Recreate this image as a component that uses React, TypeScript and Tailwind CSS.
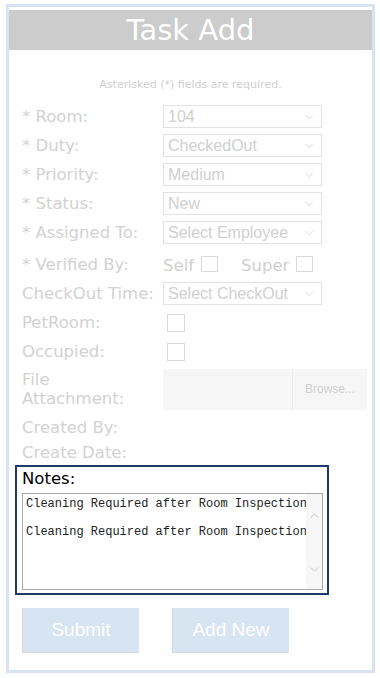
import { ChevronDown, ChevronUp } from "lucide-react";

type SelectRow = { label: string; value: string; required?: boolean };

const selects: SelectRow[] = [
  { label: "Room:", value: "104", required: true },
  { label: "Duty:", value: "CheckedOut", required: true },
  { label: "Priority:", value: "Medium", required: true },
  { label: "Status:", value: "New", required: true },
  { label: "Assigned To:", value: "Select Employee", required: true },
];

const verdana = "font-['DejaVu_Sans',Verdana,sans-serif]";
const arial = "font-['Liberation_Sans',Arial,sans-serif]";

function Label({ children, required }: { children: React.ReactNode; required?: boolean }) {
  return (
    <span className={`${verdana} text-[16.5px] leading-[19px] text-[#d2d2d2] w-[141px] shrink-0 whitespace-nowrap`}>
      {required && "* "}
      {children}
    </span>
  );
}

function FakeSelect({ value }: { value: string }) {
  return (
    <div className="w-[159px] h-[23px] border border-[#e2e2e2] flex items-center justify-between pl-[4px] pr-[5px]">
      <span className={`${arial} text-[16px] leading-none text-[#d0d0d0]`}>{value}</span>
      <ChevronDown size={14} strokeWidth={1.2} className="text-[#c8c8c8]" />
    </div>
  );
}

function Box({ className = "" }: { className?: string }) {
  return <span className={`inline-block w-[17px] h-[16px] border border-[#dadada] bg-white ${className}`} />;
}

export default function App() {
  return (
    <div className="w-[380px] h-[678px] bg-white">
      <div className="ml-[6px] pt-[4px]">
        <div className="w-[369px] h-[669px] border-[3px] border-[#dae3f3] pt-[3px]">
          <div className="h-[40px] bg-[#cccccc] flex items-center justify-center">
            <h1 className={`${verdana} text-[29px] leading-none text-white`}>Task Add</h1>
          </div>

          <p className={`${verdana} mt-[28px] text-center text-[11px] leading-[13px] text-[#cfcfcf]`}>
            Asterisked (*) fields are required.
          </p>

          <div className="pl-[13px] mt-[11px] flex flex-col">
            {selects.map((row) => (
              <div key={row.label} className="h-[29px] flex items-center">
                <Label required={row.required}>{row.label}</Label>
                <FakeSelect value={row.value} />
              </div>
            ))}

            <div className="h-[32px] flex items-center pt-[2px]">
              <Label required>Verified By:</Label>
              <span className={`${verdana} text-[16.5px] leading-none text-[#d0d0d0] mt-[4px]`}>Self</span>
              <Box className="ml-[7px]" />
              <span className={`${verdana} text-[16.5px] leading-none text-[#d0d0d0] ml-[23px] mt-[4px]`}>Super</span>
              <Box className="ml-[7px]" />
            </div>

            <div className="h-[29px] flex items-center">
              <Label>CheckOut Time:</Label>
              <FakeSelect value="Select CheckOut" />
            </div>

            <div className="h-[29px] flex items-center">
              <Label>PetRoom:</Label>
              <Box className="ml-[4px] h-[18px] w-[18px]" />
            </div>

            <div className="h-[29px] flex items-center">
              <Label>Occupied:</Label>
              <Box className="ml-[4px] h-[18px] w-[18px]" />
            </div>

            <div className="h-[46px] flex items-center">
              <Label>
                File
                <br />
                Attachment:
              </Label>
              <div className="w-[204px] h-[41px] bg-[#f6f6f6] flex">
                <div className="flex-1" />
                <div className={`${arial} w-[75px] border-l border-[#ececec] flex items-center justify-center text-[12px] text-[#d0d0d0]`}>
                  Browse...
                </div>
              </div>
            </div>

            <div className="h-[26px] flex items-center mt-[2px]">
              <Label>Created By:</Label>
            </div>
            <div className="h-[25px] flex items-center">
              <Label>Create Date:</Label>
            </div>
          </div>

          <div className="ml-[6px] w-[314px] h-[130px] border-2 border-[#1f3a68] pl-[5px] pt-[2px]">
            <p className={`${verdana} text-[16.5px] leading-[20px] text-black`}>Notes:</p>
            <div className="mt-[4px] w-[301px] h-[97px] border border-[#a9a9a9] flex">
              <div className="flex-1 overflow-hidden pl-[3px] pt-[3px]">
                <p className="font-['Liberation_Mono','Courier_New',monospace] text-[12px] leading-[14px] text-[#222] whitespace-pre">
                  {"Cleaning Required after Room Inspection\n\nCleaning Required after Room Inspection"}
                </p>
              </div>
              <div className="w-[16px] bg-[#f7f7f7] flex flex-col items-center justify-between pt-[15px] pb-[13px]">
                <ChevronUp size={13} strokeWidth={1.5} className="text-[#bdbdbd]" />
                <ChevronDown size={13} strokeWidth={1.5} className="text-[#bdbdbd]" />
              </div>
            </div>
          </div>

          <div className="pl-[13px] mt-[13px] flex gap-[33px]">
            <button className={`${arial} w-[117px] h-[45px] bg-[#d7e5f3] border-l border-b border-[#d4d8dc] text-white text-[19px]`}>
              Submit
            </button>
            <button className={`${arial} w-[117px] h-[45px] bg-[#d7e5f3] border-l border-b border-[#d4d8dc] text-white text-[19px]`}>
              Add New
            </button>
          </div>
        </div>
      </div>
    </div>
  );
}
